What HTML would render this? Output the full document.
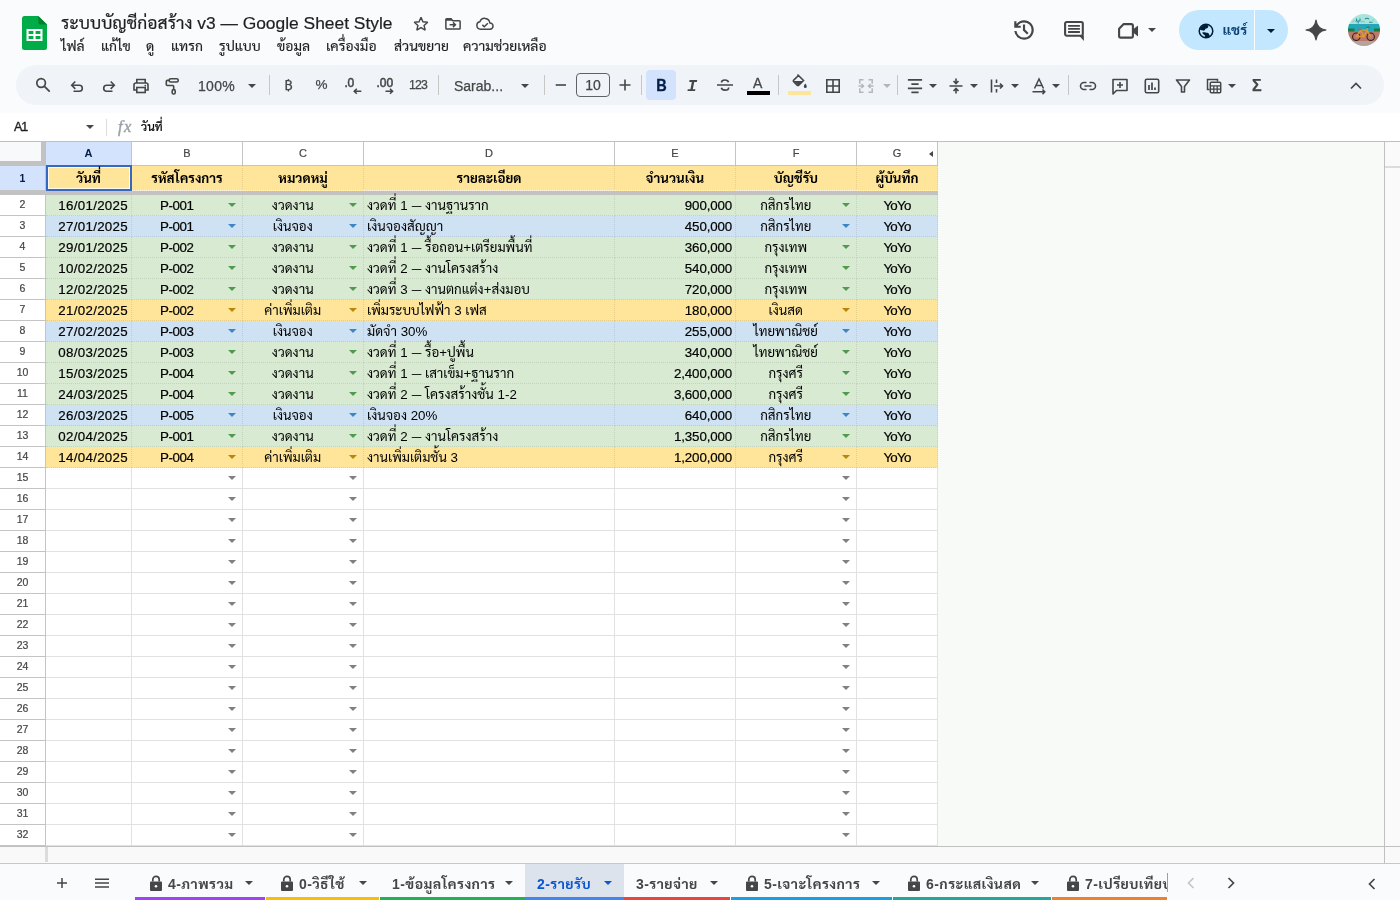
<!DOCTYPE html>
<html lang="th">
<head>
<meta charset="utf-8">
<title>ระบบบัญชีก่อสร้าง v3 — Google Sheet Style</title>
<style>
*{box-sizing:border-box;margin:0;padding:0}
html,body{width:1400px;height:900px;overflow:hidden;background:#f9fbfd}
body{position:relative;font-family:"Liberation Sans","Sarabun","Noto Sans Thai",sans-serif;color:#1f1f1f;-webkit-font-smoothing:antialiased}
.abs{position:absolute}
svg{display:block;overflow:visible}
/* ---------- title bar ---------- */
.logo{position:absolute;left:21.5px;top:16px}
.title{position:absolute;left:61px;top:10px;height:26px;line-height:26px;font-size:17.4px;color:#1f1f1f;white-space:nowrap;-webkit-text-stroke:.200px #1f1f1f}
.ticon{position:absolute;top:15px}
.menu{position:absolute;top:36px;left:61px;height:20px;line-height:20px;font-size:13.900px;color:#1f1f1f;white-space:nowrap;-webkit-text-stroke:.150px #1f1f1f}
.menu span{position:absolute;top:0}
.ric{position:absolute}
.share{position:absolute;left:1179px;top:10px;width:109px;height:40px;border-radius:20px;background:#c2e7ff;overflow:hidden}
.share .t{position:absolute;left:43.500px;top:9px;font-size:14px;font-weight:bold;color:#0a4278;line-height:22px}
.share .dv{position:absolute;left:75px;top:0;width:1px;height:40px;background:#f9fbfd}
.avatar{position:absolute;left:1348px;top:14px;width:32px;height:32px;border-radius:50%;overflow:hidden}
/* ---------- toolbar ---------- */
.tb{position:absolute;left:16px;top:65px;width:1368px;height:40px;border-radius:20px;background:#f0f4f9}
.tb .i{position:absolute;top:11px}
.tb .sep{position:absolute;top:10px;width:1px;height:20px;background:#c7c7c7}
.tb .tx{position:absolute;top:10px;height:20px;line-height:20px;font-size:14px;color:#444746;white-space:nowrap;-webkit-text-stroke:.250px #444746}
.tb .car{position:absolute;top:19px;width:0;height:0;border-left:4px solid transparent;border-right:4px solid transparent;border-top:4px solid #444746}
.tb .fs{position:absolute;left:560px;top:8px;width:34px;height:24px;border:1px solid #5f6368;border-radius:4px;font-size:14px;line-height:22px;text-align:center;color:#444746;-webkit-text-stroke:.250px #444746}
.tb .bold{position:absolute;left:630px;top:5px;width:30px;height:30px;border-radius:4px;background:#d3e3fd}
/* ---------- formula bar ---------- */
.fb{position:absolute;left:0;top:113px;width:1400px;height:28px;background:#fff}
.fb .nm{position:absolute;left:14px;top:4px;font-size:12.500px;line-height:20px;color:#1f1f1f;letter-spacing:-1.200px;-webkit-text-stroke:.350px #1f1f1f}
.fb .car{position:absolute;left:86px;top:12px;width:0;height:0;border-left:4px solid transparent;border-right:4px solid transparent;border-top:4px solid #444746}
.fb .sep{position:absolute;left:106px;top:6px;width:1px;height:17px;background:#dadce0}
.fb .fx{position:absolute;left:118px;top:4px;font:italic 16.500px "Liberation Serif",serif;color:#9aa0a6;line-height:20px;-webkit-text-stroke:.400px #9aa0a6;letter-spacing:1.300px}
.fb .val{position:absolute;left:141px;top:4px;font-size:12px;line-height:20px;color:#000;-webkit-text-stroke:.200px #000}
/* ---------- grid ---------- */
.grid{position:absolute;left:0;top:142px;width:1400px;height:721px;background:#f8faf8;overflow:hidden}
.gtop{position:absolute;left:0;top:141px;width:1400px;height:1px;background:#c0c0c0}
.grid>*{position:absolute}
.corner{left:0;top:0;width:46px;height:24px;background:#c2c2c2}
.corner:before{content:"";position:absolute;left:0;top:0;width:41px;height:19px;background:#f8f9fa}
.ch{top:0;height:23px;background:#fff;border-right:0;font-size:11px;line-height:23px;text-align:center;color:#444746;box-shadow:1px 0 0 #c4c4c4,0 1px 0 #c4c4c4,1px 1px 0 #c4c4c4;-webkit-text-stroke:.200px #444746}
.ch.sel{background:#d3e3fd;color:#041e49;font-weight:bold;-webkit-text-stroke:0}
.garr{position:absolute;right:4.500px;top:9px;width:0;height:0;border-top:3.500px solid transparent;border-bottom:3.500px solid transparent;border-right:4.500px solid #444746}
.rh{left:0;width:45px;height:20px;background:#fff;font-size:10.500px;line-height:19px;text-align:center;color:#444746;box-shadow:1px 0 0 #c4c4c4,0 1px 0 #c4c4c4,1px 1px 0 #c4c4c4;-webkit-text-stroke:.200px #444746}
.rh.sel{background:#d3e3fd;color:#041e49;font-weight:bold;-webkit-text-stroke:0}
.hc{top:24px;height:25px;background:#ffe599;font-size:13.33px;font-weight:bold;line-height:26px;text-align:center;color:#000;white-space:nowrap;border-right:1px dotted rgba(0,0,0,.095);border-bottom:1px dotted rgba(255,255,255,.7);box-sizing:border-box}
.hc span{position:relative;z-index:1}
.selbox{left:46px;top:23px;width:86px;height:26px;border:2px solid #3568c0;box-shadow:inset 0 0 0 1px rgba(255,255,255,.75)}
.frz{left:0;top:48.500px;width:938px;height:4.500px;background:#c2c2c2}
.row{left:46px;width:891px;height:21px;background:#fff}
.row .c{position:absolute;top:0;height:21px;border-right:1px solid #e1e1e1;border-bottom:1px solid #e1e1e1;box-sizing:border-box;font-size:13.33px;line-height:22px;color:#000;white-space:nowrap;padding:0 3px}
.row .c span{position:relative;z-index:1}
.row .c .em{display:inline-block;transform:scaleX(.720);margin:0 -1.700px}
.row .kA{letter-spacing:.300px;-webkit-text-stroke:.200px #000}
.row .kB{letter-spacing:-.400px;-webkit-text-stroke:.200px #000}
.row .kE{letter-spacing:-.150px;-webkit-text-stroke:.200px #000}
.row .kG{letter-spacing:-.750px;-webkit-text-stroke:.200px #000}
.row .c.al{text-align:left}
.row .c.ar{text-align:right}
.row .c.ac{text-align:center}
.row .c.hasdd{padding-right:23.500px;padding-left:3px}
.dd{position:absolute;right:6px;top:8px;width:0;height:0;border-left:4px solid transparent;border-right:4px solid transparent;border-top:4px solid #808080}
.cg .c{background:#d9ead3;border-right:1px dotted rgba(0,0,0,.095);border-bottom:1px dotted rgba(0,0,0,.095)}
.cb .c{background:#cfe2f3;border-right:1px dotted rgba(0,0,0,.095);border-bottom:1px dotted rgba(0,0,0,.095)}
.cy .c{background:#ffe599;border-right:1px dotted rgba(0,0,0,.095);border-bottom:1px dotted rgba(0,0,0,.095)}
.cg .dd{border-top-color:#4e9a4e}
.cb .dd{border-top-color:#3d85c6}
.cy .dd{border-top-color:#b8860b}
/* scrollbars */
.vsb{left:1384px;top:0;width:16px;height:704px;background:#fafafa;border-left:1px solid #c0c0c0}
.vsb:before{content:"";position:absolute;left:0;top:24px;width:16px;height:2px;background:#dadce0}
.hsb{left:0;top:704px;width:1400px;height:17px;background:#f9f9f9;border-top:1px solid #c0c0c0}
.hsb:before{content:"";position:absolute;left:45px;top:0;width:2.500px;height:14.500px;background:#dadce0}
.hsb:after{content:"";position:absolute;left:1384px;top:0;width:1px;height:16px;background:#c0c0c0}
/* ---------- tabs ---------- */
.tabs{position:absolute;left:0;top:863px;width:1400px;height:37px;background:#f9fbfd;border-top:1px solid #c7c7c7}
.tabs>*{position:absolute}
.tab{top:0;height:36px;font-size:14px;line-height:36px;color:#444746;white-space:nowrap;overflow:hidden}
.tab .ul{position:absolute;left:0;right:0;bottom:0;height:3px}
.tab .lk{position:absolute;top:11px}
.tab .nm{position:absolute;top:2px;font-weight:bold;letter-spacing:.450px}
.tab .car{position:absolute;top:17px;width:0;height:0;border-left:4px solid transparent;border-right:4px solid transparent;border-top:4px solid #444746;margin-left:1px}
.tab.act{background:#dde3ec;color:#0b57d0}
.tab.act .car{border-top-color:#0b57d0}
#app{position:absolute;left:0;top:0;width:1400px;height:900px;overflow:hidden;background:#f9fbfd;will-change:transform}
</style>
</head>
<body>
<div id="app">

<!-- ===== title bar ===== -->
<svg class="logo" width="25" height="34" viewBox="0 0 25 34">
  <path d="M2.500 0H16.300L25 8.600V31.500a2.500 2.500 0 0 1-2.500 2.500h-20A2.500 2.500 0 0 1 0 31.500V2.500A2.500 2.500 0 0 1 2.500 0z" fill="#00ac47"/>
  <path d="M16.300 0L25 8.600H18.300a2 2 0 0 1-2-2z" fill="#00832d"/>
  <path d="M4.500 13h16v12h-16zM6.600 15.100v2.800h4.800v-2.800zM13.600 15.100v2.800h4.800v-2.800zM6.600 20.100v2.800h4.800v-2.800zM13.600 20.100v2.800h4.800v-2.800z" fill="#fff" fill-rule="evenodd"/>
</svg>
<div class="title">ระบบบัญชีก่อสร้าง v3 — Google Sheet Style</div>
<svg class="ticon" style="left:412px" width="18" height="18" viewBox="0 0 24 24"><path d="M12 3l2.600 6.100 6.400.600-4.900 4.200 1.500 6.300L12 16.900 6.400 20.200l1.500-6.300L3 9.700l6.400-.600z" fill="none" stroke="#444746" stroke-width="1.900" stroke-linejoin="miter" stroke-miterlimit="2.500"/></svg>
<svg class="ticon" style="left:444px" width="18" height="18" viewBox="0 0 24 24"><path d="M3.500 5h6l2 2.500h9a1 1 0 0 1 1 1V17.700a1 1 0 0 1-1 1h-17a1 1 0 0 1-1-1V6a1 1 0 0 1 1-1z" fill="none" stroke="#444746" stroke-width="2" stroke-linejoin="round"/><path d="M2.500 5h7.500l1.500 2.500h-9z" fill="#444746"/><path d="M7.500 13h7M12 9.800l3.200 3.200-3.200 3.200" fill="none" stroke="#444746" stroke-width="2"/></svg>
<svg class="ticon" style="left:475px" width="20" height="18" viewBox="0 0 26 24"><path d="M7 19a5 5 0 0 1-.800-9.900 6.800 6.800 0 0 1 13.200 1.500 4.200 4.200 0 0 1 .200 8.400z" fill="none" stroke="#444746" stroke-width="2" stroke-linejoin="round"/><path d="M9.500 13.200l2.500 2.500 4.800-4.800" fill="none" stroke="#444746" stroke-width="2"/></svg>
<div class="menu">
  <span style="left:0">ไฟล์</span>
  <span style="left:40px">แก้ไข</span>
  <span style="left:85px">ดู</span>
  <span style="left:110px">แทรก</span>
  <span style="left:158px">รูปแบบ</span>
  <span style="left:216px">ข้อมูล</span>
  <span style="left:265px">เครื่องมือ</span>
  <span style="left:333px">ส่วนขยาย</span>
  <span style="left:402px">ความช่วยเหลือ</span>
</div>
<!-- right side -->
<svg class="ric" style="left:1011px;top:16.800px" width="26" height="26" viewBox="0 0 24 24"><path d="M12 21q-3.450 0-6.013-2.288T3.050 13H5.100q.350 2.600 2.313 4.300T12 19q2.925 0 4.963-2.038T19 12t-2.037-4.962T12 5q-1.725 0-3.225.800T6.250 8H9v2H3V4h2v2.350q1.275-1.600 3.113-2.475T12 3q1.875 0 3.513.713t2.850 1.924 1.925 2.850T21 12t-.712 3.513-1.925 2.850-2.850 1.925T12 21m2.800-4.800L11 12.400V7h2v4.600l3.200 3.200z" fill="#444746"/></svg>
<svg class="ric" style="left:1062px;top:18px" width="24" height="24" viewBox="0 0 24 24"><rect x="3.100" y="4" width="17.700" height="13.700" rx="1.600" fill="none" stroke="#444746" stroke-width="2.100"/><path d="M17 17.500h4.900v5.400z" fill="#444746"/><path d="M6.100 7.900h11.800M6.100 10.900h11.800M6.100 14h11.800" stroke="#444746" stroke-width="1.900"/></svg>
<svg class="ric" style="left:1116px;top:18px" width="24" height="24" viewBox="0 0 24 24"><path d="M7.700 6.100h7.600a1.600 1.600 0 0 1 1.600 1.600v10.300a1.600 1.600 0 0 1-1.600 1.600H4.700a1.600 1.600 0 0 1-1.600-1.600v-7.200z" fill="none" stroke="#444746" stroke-width="2.100" stroke-linejoin="round"/><path d="M16.500 11.800L22 7.400v11l-5.500-4.400z" fill="#444746"/></svg>
<svg class="ric" style="left:1148px;top:28px" width="8" height="4" viewBox="0 0 8 4"><path d="M0 0h8L4 4z" fill="#444746"/></svg>
<div class="share">
  <svg class="abs" style="left:18.500px;top:12.500px" width="16" height="16" viewBox="0 0 16 16"><circle cx="8" cy="8" r="6.800" fill="#c2e7ff" stroke="#001d35" stroke-width="1.500"/><path d="M1.800 6.200C3 3.400 5.300 1.700 8.200 1.500 9.900 2 10.600 3 10.200 4.200 9.800 5.200 8.400 5 7.600 5.800 6.800 6.600 7.200 7.300 6.200 7.600 5.200 7.900 4.800 7 3.800 7.200 3 7.300 2.300 6.900 1.800 6.200zM4.300 9.600C5.400 9 6.600 9.200 7.600 9.600 8.700 10 9.900 9.600 10.700 10.400 11.400 11.200 11.200 12.300 12 13.200 10.800 14.200 9.500 14.600 8 14.600 7.200 14.600 6.900 14.200 7 13.200 7.100 12.200 6.200 11.900 5.400 11.300 4.800 10.800 4.300 10.300 4.300 9.600z" fill="#001d35"/></svg>
  <span class="t">แชร์</span>
  <span class="dv"></span>
  <svg class="abs" style="left:88px;top:18.700px" width="8" height="4" viewBox="0 0 8 4"><path d="M0 0h8L4 4z" fill="#001d35"/></svg>
</div>
<svg class="ric" style="left:1306px;top:20px" width="20" height="20" viewBox="0 0 20 20"><path d="M10 0C10.700 5.600 14.400 9.300 20 10 14.400 10.700 10.700 14.400 10 20 9.300 14.400 5.600 10.700 0 10 5.600 9.300 9.300 5.600 10 0z" fill="#444746" stroke="#444746" stroke-width="1.200" stroke-linejoin="round"/></svg>
<div class="avatar">
  <svg width="32" height="32" viewBox="0 0 32 32"><rect width="32" height="32" fill="#a9e4dc"/><rect y="10" width="32" height="8" fill="#23a6ba"/><rect y="17.500" width="32" height="10" fill="#b97a6e"/><rect y="27" width="32" height="5" fill="#b7a39e"/><path d="M0 14.500h6.500v3H0zM26 14.500h6v3h-6z" fill="#1e7a3a"/><path d="M8.500 4.500v2.500h3.500v-2.500M10.200 7v2.500M17 5.200c1-1.200 3-1.200 4 0M21 8.200h3.500" fill="none" stroke="#2b8a96" stroke-width="1.100"/><path d="M4.500 8l2-1.500 2 2 2-1.500M13 8.500l2-1.500 2 1.500M24.500 7l1.500-1.500" fill="none" stroke="#6fb9b6" stroke-width=".8"/><circle cx="8.300" cy="22.700" r="3.700" fill="none" stroke="#3b1d18" stroke-width="1.100"/><circle cx="22.700" cy="22.700" r="3.700" fill="none" stroke="#3b1d18" stroke-width="1.100"/><path d="M8.300 22.700l4.200-6.500h6.500l3.700 6.500M12.500 16.200l3.500 6.300 3-6.300M16 22.500H8.500M19 16.200l.800-2.700" fill="none" stroke="#e39a2d" stroke-width="1.300"/><path d="M10 15.500h3.500" stroke="#d8562a" stroke-width="1.600"/><path d="M18.500 13.300h3" stroke="#7a5a3a" stroke-width="1.200"/></svg>
</div>
<!-- ===== toolbar ===== -->
<div class="tb">
  <svg class="i" style="left:17px;top:10px" width="20" height="20" viewBox="0 0 20 20"><circle cx="8.100" cy="8" r="4.300" fill="none" stroke="#444746" stroke-width="1.700"/><path d="M11.200 11.100l5.500 5.500" stroke="#444746" stroke-width="1.800"/></svg>
  <svg class="i" style="left:51px;top:10px" width="20" height="20" viewBox="0 0 20 20"><path d="M5.200 10.200h7.100a3 3 0 0 1 0 6H6.500" fill="none" stroke="#444746" stroke-width="1.600"/><path d="M8.300 6.500L4.700 10.200l3.600 3.700" fill="none" stroke="#444746" stroke-width="1.600"/></svg>
  <svg class="i" style="left:83px;top:10px" width="20" height="20" viewBox="0 0 20 20"><path d="M14.800 10.200H7.700a3 3 0 0 0 0 6h5.800" fill="none" stroke="#444746" stroke-width="1.600"/><path d="M11.700 6.500l3.600 3.700-3.600 3.700" fill="none" stroke="#444746" stroke-width="1.600"/></svg>
  <svg class="i" style="left:115px;top:11px" width="20" height="20" viewBox="0 0 20 20"><path d="M5.800 7V3.500h8.400V7" fill="none" stroke="#444746" stroke-width="1.600"/><path d="M5.500 14H3V9a2 2 0 0 1 2-2h10a2 2 0 0 1 2 2v5h-2.500" fill="none" stroke="#444746" stroke-width="1.600"/><rect x="5.800" y="11.500" width="8.400" height="5" fill="none" stroke="#444746" stroke-width="1.600"/><circle cx="14.300" cy="9.600" r=".9" fill="#444746"/></svg>
  <svg class="i" style="left:146px;top:10px" width="20" height="20" viewBox="0 0 20 20"><rect x="7.200" y="3.800" width="9" height="3.200" rx="1.500" fill="none" stroke="#444746" stroke-width="1.600"/><path d="M7.200 5.400H5.300a1 1 0 0 0-1 1v3.100a1 1 0 0 0 1 1h5.400a1 1 0 0 1 1 1V14" fill="none" stroke="#444746" stroke-width="1.600"/><rect x="10.200" y="14.600" width="3" height="4.400" rx="1.300" fill="none" stroke="#444746" stroke-width="1.600"/></svg>
  <span class="tx" style="left:182px;top:11px;letter-spacing:.300px">100%</span>
  <i class="car" style="left:232px"></i>
  <i class="sep" style="left:253px"></i>
  <span class="tx" style="left:268.500px;font-size:14px;top:9.500px">฿</span>
  <span class="tx" style="left:299.500px;font-size:13.500px;top:10px">%</span>
  <span class="tx" style="left:328.400px;top:7.700px;font-size:12px;-webkit-text-stroke:.500px #444746;letter-spacing:-.100px">.0</span>
  <svg class="i" style="left:337px;top:22.500px" width="9" height="7" viewBox="0 0 9 7"><path d="M8.300 3.300H1.400M3.800.800L1.200 3.300l2.600 2.500" fill="none" stroke="#444746" stroke-width="1.500"/></svg>
  <span class="tx" style="left:360.600px;top:7.700px;font-size:12px;-webkit-text-stroke:.500px #444746;letter-spacing:-.100px">.00</span>
  <svg class="i" style="left:368.500px;top:22.500px" width="9" height="7" viewBox="0 0 9 7"><path d="M.500 3.300h6.900M5 .800l2.600 2.500L5 5.800" fill="none" stroke="#444746" stroke-width="1.500"/></svg>
  <span class="tx" style="left:393px;top:9.800px;font-size:12.300px;letter-spacing:-.900px">123</span>
  <i class="sep" style="left:422px"></i>
  <span class="tx" style="left:438px;top:11px">Sarab...</span>
  <i class="car" style="left:505px"></i>
  <i class="sep" style="left:528px"></i>
  <svg class="i" style="left:535px;top:10px" width="20" height="20" viewBox="0 0 20 20"><path d="M4.700 10h10.300" stroke="#444746" stroke-width="1.600"/></svg>
  <div class="fs">10</div>
  <svg class="i" style="left:599px;top:10px" width="20" height="20" viewBox="0 0 20 20"><path d="M4.500 10h11M10 4.500v11" stroke="#444746" stroke-width="1.600"/></svg>
  <i class="sep" style="left:625px"></i>
  <div class="bold"></div>
  <span class="tx" style="left:640.300px;top:10.500px;font-weight:bold;font-size:14.500px;color:#041e49;-webkit-text-stroke:.300px #041e49;transform:scaleY(1.080);transform-origin:50% 70%">B</span>
  <span class="tx" style="left:671px;top:12px;font:italic bold 17px 'Liberation Mono',monospace;line-height:20px;-webkit-text-stroke:0">I</span>
  <svg class="i" style="left:699px;top:10px" width="20" height="20" viewBox="0 0 20 20"><path d="M2 10h16" stroke="#444746" stroke-width="1.500"/><path d="M13.500 7.200c-.300-1.200-1.500-2.200-3.500-2.200-2.200 0-3.500 1.100-3.500 2.500M6.300 12.800c.300 1.300 1.600 2.300 3.700 2.300 2.300 0 3.700-1.100 3.700-2.700" fill="none" stroke="#444746" stroke-width="1.600"/></svg>
  <span class="tx" style="left:737px;font-size:14px;top:7.500px;-webkit-text-stroke:.300px #444746">A</span>
  <i class="abs" style="left:731px;top:26px;width:23px;height:4px;background:#000"></i>
  <i class="sep" style="left:762px"></i>
  <svg class="i" style="left:773px;top:6px" width="20" height="20" viewBox="0 0 20 20"><path d="M8.500 3.500l6 6-4.700 4.700a1.200 1.200 0 0 1-1.700 0L4.700 10.800a1.200 1.200 0 0 1 0-1.700L9.500 4.500" fill="none" stroke="#444746" stroke-width="1.600"/><path d="M4.500 10h9.800l-5 4.800z" fill="#444746"/><path d="M16.300 12.500c.800 1.200 1.500 2.100 1.500 2.900a1.500 1.500 0 0 1-3 0c0-.800.700-1.700 1.500-2.900z" fill="#444746"/></svg>
  <i class="abs" style="left:772px;top:26px;width:23px;height:4px;background:#ffe599"></i>
  <svg class="i" style="left:807px" width="20" height="20" viewBox="0 0 20 20"><path d="M3.800 3.800h12.400v12.400H3.800zM10 3.800v12.400M3.800 10h12.400" fill="none" stroke="#444746" stroke-width="1.600"/></svg>
  <svg class="i" style="left:840px" width="20" height="20" viewBox="0 0 20 20"><path d="M7.500 3.800H3.800v4M12.500 3.800h3.700v4M7.500 16.200H3.800v-4M12.500 16.200h3.700v-4M2.500 10h5M5.500 8l2 2-2 2M17.500 10h-5M14.500 8l-2 2 2 2" fill="none" stroke="#b4b7ba" stroke-width="1.500"/></svg>
  <i class="car" style="left:867px;border-top-color:#b4b7ba"></i>
  <i class="sep" style="left:881px"></i>
  <svg class="i" style="left:888px" width="20" height="20" viewBox="0 0 20 20"><path d="M3.900 3.900h14.200M7.400 8.100h7.200M3.900 12.400h14.200M7.400 16.300h7.200" stroke="#444746" stroke-width="1.700"/></svg>
  <i class="car" style="left:913px"></i>
  <svg class="i" style="left:930px" width="20" height="20" viewBox="0 0 20 20"><path d="M3.500 10h13M10 2.500v5M7.500 5l2.500 2.500L12.500 5M10 17.500v-5M7.500 15l2.500-2.500 2.500 2.500" fill="none" stroke="#444746" stroke-width="1.600"/></svg>
  <i class="car" style="left:954px"></i>
  <svg class="i" style="left:971px" width="20" height="20" viewBox="0 0 20 20"><path d="M4.500 3.500v13M9.500 3.500v3.500M9.500 13v3.500M7 10h8.500M13 7.500l2.500 2.500-2.500 2.500" fill="none" stroke="#444746" stroke-width="1.600"/></svg>
  <i class="car" style="left:995px"></i>
  <svg class="i" style="left:1012.500px" width="20" height="20" viewBox="0 0 20 20"><path d="M5.500 12.500L10 3l4.500 9.500M7 9.500h6" fill="none" stroke="#444746" stroke-width="1.500"/><path d="M3.500 15.800h12M13.500 13.500l2.300 2.300-2.300 2.300" fill="none" stroke="#444746" stroke-width="1.500"/></svg>
  <i class="car" style="left:1036px"></i>
  <i class="sep" style="left:1052px"></i>
  <svg class="i" style="left:1062px" width="20" height="20" viewBox="0 0 20 20"><path d="M8.500 6.500H6a3.500 3.500 0 0 0 0 7h2.500M11.500 6.500H14a3.500 3.500 0 0 1 0 7h-2.500M6.500 10h7" fill="none" stroke="#444746" stroke-width="1.600"/></svg>
  <svg class="i" style="left:1094px" width="20" height="20" viewBox="0 0 20 20"><path d="M3 3.500h14v11H6.500L3 18z" fill="none" stroke="#444746" stroke-width="1.600" stroke-linejoin="round"/><path d="M10 6v6M7 9h6" stroke="#444746" stroke-width="1.600"/></svg>
  <svg class="i" style="left:1126px" width="20" height="20" viewBox="0 0 20 20"><rect x="3.300" y="3.300" width="13.400" height="13.400" rx="1.500" fill="none" stroke="#444746" stroke-width="1.600"/><path d="M7 9v5M10 6.500v7.500M13 11.500v2.500" stroke="#444746" stroke-width="1.700"/></svg>
  <svg class="i" style="left:1157px" width="20" height="20" viewBox="0 0 20 20"><path d="M3.500 4h13l-5 6.500v5.500h-3v-5.500z" fill="none" stroke="#444746" stroke-width="1.600" stroke-linejoin="round"/></svg>
  <svg class="i" style="left:1188px" width="20" height="20" viewBox="0 0 20 20"><path d="M5.500 13.500H3.500V3.500h10v2" fill="none" stroke="#444746" stroke-width="1.500"/><rect x="6.300" y="6.300" width="10.400" height="10.400" rx="1" fill="none" stroke="#444746" stroke-width="1.500"/><path d="M6.300 9.800h10.400M9.800 9.800v6.900M13.200 9.800v6.900M6.300 13.200h10.400" stroke="#444746" stroke-width="1.300"/></svg>
  <i class="car" style="left:1212px"></i>
  <span class="tx" style="left:1236px;top:11px;font-size:16px;font-weight:bold">Σ</span>
  <svg class="i" style="left:1330px" width="20" height="20" viewBox="0 0 20 20"><path d="M5 12.500l5-5 5 5" fill="none" stroke="#444746" stroke-width="1.700"/></svg>
</div>
<!-- ===== formula bar ===== -->
<div class="fb">
  <span class="nm">A1</span>
  <i class="car"></i>
  <i class="sep"></i>
  <span class="fx">fx</span>
  <span class="val">วันที่</span>
</div>

<div class="gtop"></div>
<div class="grid">
<div class="corner"></div>
<div class="ch sel" style="left:46px;width:85px"><span>A</span></div>
<div class="ch" style="left:132px;width:110px"><span>B</span></div>
<div class="ch" style="left:243px;width:120px"><span>C</span></div>
<div class="ch" style="left:364px;width:250px"><span>D</span></div>
<div class="ch" style="left:615px;width:120px"><span>E</span></div>
<div class="ch" style="left:736px;width:120px"><span>F</span></div>
<div class="ch" style="left:857px;width:80px"><span>G</span><i class="garr"></i></div>
<div class="rh sel" style="top:24px;height:24px;line-height:24px">1</div>
<div class="hc" style="left:46px;width:86px"><span>วันที่</span></div>
<div class="hc" style="left:132px;width:111px"><span>รหัสโครงการ</span></div>
<div class="hc" style="left:243px;width:121px"><span>หมวดหมู่</span></div>
<div class="hc" style="left:364px;width:251px"><span>รายละเอียด</span></div>
<div class="hc" style="left:615px;width:121px"><span>จำนวนเงิน</span></div>
<div class="hc" style="left:736px;width:121px"><span>บัญชีรับ</span></div>
<div class="hc" style="left:857px;width:81px"><span>ผู้บันทึก</span></div>
<div class="selbox"></div>
<div class="frz"></div>
<div class="rh" style="top:53px">2</div>
<div class="row cg" style="top:53px">
<div class="c ar kA" style="left:0px;width:86px"><span>16/01/2025</span></div>
<div class="c ac kB hasdd" style="left:86px;width:111px"><span>P-001</span><i class="dd"></i></div>
<div class="c ac kC hasdd" style="left:197px;width:121px"><span>งวดงาน</span><i class="dd"></i></div>
<div class="c al kD" style="left:318px;width:251px"><span>งวดที่ 1 <span class="em">—</span> งานฐานราก</span></div>
<div class="c ar kE" style="left:569px;width:121px"><span>900,000</span></div>
<div class="c ac kF hasdd" style="left:690px;width:121px"><span>กสิกรไทย</span><i class="dd"></i></div>
<div class="c ac kG" style="left:811px;width:81px"><span>YoYo</span></div>
</div>
<div class="rh" style="top:74px">3</div>
<div class="row cb" style="top:74px">
<div class="c ar kA" style="left:0px;width:86px"><span>27/01/2025</span></div>
<div class="c ac kB hasdd" style="left:86px;width:111px"><span>P-001</span><i class="dd"></i></div>
<div class="c ac kC hasdd" style="left:197px;width:121px"><span>เงินจอง</span><i class="dd"></i></div>
<div class="c al kD" style="left:318px;width:251px"><span>เงินจองสัญญา</span></div>
<div class="c ar kE" style="left:569px;width:121px"><span>450,000</span></div>
<div class="c ac kF hasdd" style="left:690px;width:121px"><span>กสิกรไทย</span><i class="dd"></i></div>
<div class="c ac kG" style="left:811px;width:81px"><span>YoYo</span></div>
</div>
<div class="rh" style="top:95px">4</div>
<div class="row cg" style="top:95px">
<div class="c ar kA" style="left:0px;width:86px"><span>29/01/2025</span></div>
<div class="c ac kB hasdd" style="left:86px;width:111px"><span>P-002</span><i class="dd"></i></div>
<div class="c ac kC hasdd" style="left:197px;width:121px"><span>งวดงาน</span><i class="dd"></i></div>
<div class="c al kD" style="left:318px;width:251px"><span>งวดที่ 1 <span class="em">—</span> รื้อถอน+เตรียมพื้นที่</span></div>
<div class="c ar kE" style="left:569px;width:121px"><span>360,000</span></div>
<div class="c ac kF hasdd" style="left:690px;width:121px"><span>กรุงเทพ</span><i class="dd"></i></div>
<div class="c ac kG" style="left:811px;width:81px"><span>YoYo</span></div>
</div>
<div class="rh" style="top:116px">5</div>
<div class="row cg" style="top:116px">
<div class="c ar kA" style="left:0px;width:86px"><span>10/02/2025</span></div>
<div class="c ac kB hasdd" style="left:86px;width:111px"><span>P-002</span><i class="dd"></i></div>
<div class="c ac kC hasdd" style="left:197px;width:121px"><span>งวดงาน</span><i class="dd"></i></div>
<div class="c al kD" style="left:318px;width:251px"><span>งวดที่ 2 <span class="em">—</span> งานโครงสร้าง</span></div>
<div class="c ar kE" style="left:569px;width:121px"><span>540,000</span></div>
<div class="c ac kF hasdd" style="left:690px;width:121px"><span>กรุงเทพ</span><i class="dd"></i></div>
<div class="c ac kG" style="left:811px;width:81px"><span>YoYo</span></div>
</div>
<div class="rh" style="top:137px">6</div>
<div class="row cg" style="top:137px">
<div class="c ar kA" style="left:0px;width:86px"><span>12/02/2025</span></div>
<div class="c ac kB hasdd" style="left:86px;width:111px"><span>P-002</span><i class="dd"></i></div>
<div class="c ac kC hasdd" style="left:197px;width:121px"><span>งวดงาน</span><i class="dd"></i></div>
<div class="c al kD" style="left:318px;width:251px"><span>งวดที่ 3 <span class="em">—</span> งานตกแต่ง+ส่งมอบ</span></div>
<div class="c ar kE" style="left:569px;width:121px"><span>720,000</span></div>
<div class="c ac kF hasdd" style="left:690px;width:121px"><span>กรุงเทพ</span><i class="dd"></i></div>
<div class="c ac kG" style="left:811px;width:81px"><span>YoYo</span></div>
</div>
<div class="rh" style="top:158px">7</div>
<div class="row cy" style="top:158px">
<div class="c ar kA" style="left:0px;width:86px"><span>21/02/2025</span></div>
<div class="c ac kB hasdd" style="left:86px;width:111px"><span>P-002</span><i class="dd"></i></div>
<div class="c ac kC hasdd" style="left:197px;width:121px"><span>ค่าเพิ่มเติม</span><i class="dd"></i></div>
<div class="c al kD" style="left:318px;width:251px"><span>เพิ่มระบบไฟฟ้า 3 เฟส</span></div>
<div class="c ar kE" style="left:569px;width:121px"><span>180,000</span></div>
<div class="c ac kF hasdd" style="left:690px;width:121px"><span>เงินสด</span><i class="dd"></i></div>
<div class="c ac kG" style="left:811px;width:81px"><span>YoYo</span></div>
</div>
<div class="rh" style="top:179px">8</div>
<div class="row cb" style="top:179px">
<div class="c ar kA" style="left:0px;width:86px"><span>27/02/2025</span></div>
<div class="c ac kB hasdd" style="left:86px;width:111px"><span>P-003</span><i class="dd"></i></div>
<div class="c ac kC hasdd" style="left:197px;width:121px"><span>เงินจอง</span><i class="dd"></i></div>
<div class="c al kD" style="left:318px;width:251px"><span>มัดจำ 30%</span></div>
<div class="c ar kE" style="left:569px;width:121px"><span>255,000</span></div>
<div class="c ac kF hasdd" style="left:690px;width:121px"><span>ไทยพาณิชย์</span><i class="dd"></i></div>
<div class="c ac kG" style="left:811px;width:81px"><span>YoYo</span></div>
</div>
<div class="rh" style="top:200px">9</div>
<div class="row cg" style="top:200px">
<div class="c ar kA" style="left:0px;width:86px"><span>08/03/2025</span></div>
<div class="c ac kB hasdd" style="left:86px;width:111px"><span>P-003</span><i class="dd"></i></div>
<div class="c ac kC hasdd" style="left:197px;width:121px"><span>งวดงาน</span><i class="dd"></i></div>
<div class="c al kD" style="left:318px;width:251px"><span>งวดที่ 1 <span class="em">—</span> รื้อ+ปูพื้น</span></div>
<div class="c ar kE" style="left:569px;width:121px"><span>340,000</span></div>
<div class="c ac kF hasdd" style="left:690px;width:121px"><span>ไทยพาณิชย์</span><i class="dd"></i></div>
<div class="c ac kG" style="left:811px;width:81px"><span>YoYo</span></div>
</div>
<div class="rh" style="top:221px">10</div>
<div class="row cg" style="top:221px">
<div class="c ar kA" style="left:0px;width:86px"><span>15/03/2025</span></div>
<div class="c ac kB hasdd" style="left:86px;width:111px"><span>P-004</span><i class="dd"></i></div>
<div class="c ac kC hasdd" style="left:197px;width:121px"><span>งวดงาน</span><i class="dd"></i></div>
<div class="c al kD" style="left:318px;width:251px"><span>งวดที่ 1 <span class="em">—</span> เสาเข็ม+ฐานราก</span></div>
<div class="c ar kE" style="left:569px;width:121px"><span>2,400,000</span></div>
<div class="c ac kF hasdd" style="left:690px;width:121px"><span>กรุงศรี</span><i class="dd"></i></div>
<div class="c ac kG" style="left:811px;width:81px"><span>YoYo</span></div>
</div>
<div class="rh" style="top:242px">11</div>
<div class="row cg" style="top:242px">
<div class="c ar kA" style="left:0px;width:86px"><span>24/03/2025</span></div>
<div class="c ac kB hasdd" style="left:86px;width:111px"><span>P-004</span><i class="dd"></i></div>
<div class="c ac kC hasdd" style="left:197px;width:121px"><span>งวดงาน</span><i class="dd"></i></div>
<div class="c al kD" style="left:318px;width:251px"><span>งวดที่ 2 <span class="em">—</span> โครงสร้างชั้น 1-2</span></div>
<div class="c ar kE" style="left:569px;width:121px"><span>3,600,000</span></div>
<div class="c ac kF hasdd" style="left:690px;width:121px"><span>กรุงศรี</span><i class="dd"></i></div>
<div class="c ac kG" style="left:811px;width:81px"><span>YoYo</span></div>
</div>
<div class="rh" style="top:263px">12</div>
<div class="row cb" style="top:263px">
<div class="c ar kA" style="left:0px;width:86px"><span>26/03/2025</span></div>
<div class="c ac kB hasdd" style="left:86px;width:111px"><span>P-005</span><i class="dd"></i></div>
<div class="c ac kC hasdd" style="left:197px;width:121px"><span>เงินจอง</span><i class="dd"></i></div>
<div class="c al kD" style="left:318px;width:251px"><span>เงินจอง 20%</span></div>
<div class="c ar kE" style="left:569px;width:121px"><span>640,000</span></div>
<div class="c ac kF hasdd" style="left:690px;width:121px"><span>กสิกรไทย</span><i class="dd"></i></div>
<div class="c ac kG" style="left:811px;width:81px"><span>YoYo</span></div>
</div>
<div class="rh" style="top:284px">13</div>
<div class="row cg" style="top:284px">
<div class="c ar kA" style="left:0px;width:86px"><span>02/04/2025</span></div>
<div class="c ac kB hasdd" style="left:86px;width:111px"><span>P-001</span><i class="dd"></i></div>
<div class="c ac kC hasdd" style="left:197px;width:121px"><span>งวดงาน</span><i class="dd"></i></div>
<div class="c al kD" style="left:318px;width:251px"><span>งวดที่ 2 <span class="em">—</span> งานโครงสร้าง</span></div>
<div class="c ar kE" style="left:569px;width:121px"><span>1,350,000</span></div>
<div class="c ac kF hasdd" style="left:690px;width:121px"><span>กสิกรไทย</span><i class="dd"></i></div>
<div class="c ac kG" style="left:811px;width:81px"><span>YoYo</span></div>
</div>
<div class="rh" style="top:305px">14</div>
<div class="row cy" style="top:305px">
<div class="c ar kA" style="left:0px;width:86px"><span>14/04/2025</span></div>
<div class="c ac kB hasdd" style="left:86px;width:111px"><span>P-004</span><i class="dd"></i></div>
<div class="c ac kC hasdd" style="left:197px;width:121px"><span>ค่าเพิ่มเติม</span><i class="dd"></i></div>
<div class="c al kD" style="left:318px;width:251px"><span>งานเพิ่มเติมชั้น 3</span></div>
<div class="c ar kE" style="left:569px;width:121px"><span>1,200,000</span></div>
<div class="c ac kF hasdd" style="left:690px;width:121px"><span>กรุงศรี</span><i class="dd"></i></div>
<div class="c ac kG" style="left:811px;width:81px"><span>YoYo</span></div>
</div>
<div class="rh" style="top:326px">15</div>
<div class="row" style="top:326px">
<div class="c ar kA" style="left:0px;width:86px"></div>
<div class="c ac kB hasdd" style="left:86px;width:111px"><i class="dd"></i></div>
<div class="c ac kC hasdd" style="left:197px;width:121px"><i class="dd"></i></div>
<div class="c al kD" style="left:318px;width:251px"></div>
<div class="c ar kE" style="left:569px;width:121px"></div>
<div class="c ac kF hasdd" style="left:690px;width:121px"><i class="dd"></i></div>
<div class="c ac kG" style="left:811px;width:81px"></div>
</div>
<div class="rh" style="top:347px">16</div>
<div class="row" style="top:347px">
<div class="c ar kA" style="left:0px;width:86px"></div>
<div class="c ac kB hasdd" style="left:86px;width:111px"><i class="dd"></i></div>
<div class="c ac kC hasdd" style="left:197px;width:121px"><i class="dd"></i></div>
<div class="c al kD" style="left:318px;width:251px"></div>
<div class="c ar kE" style="left:569px;width:121px"></div>
<div class="c ac kF hasdd" style="left:690px;width:121px"><i class="dd"></i></div>
<div class="c ac kG" style="left:811px;width:81px"></div>
</div>
<div class="rh" style="top:368px">17</div>
<div class="row" style="top:368px">
<div class="c ar kA" style="left:0px;width:86px"></div>
<div class="c ac kB hasdd" style="left:86px;width:111px"><i class="dd"></i></div>
<div class="c ac kC hasdd" style="left:197px;width:121px"><i class="dd"></i></div>
<div class="c al kD" style="left:318px;width:251px"></div>
<div class="c ar kE" style="left:569px;width:121px"></div>
<div class="c ac kF hasdd" style="left:690px;width:121px"><i class="dd"></i></div>
<div class="c ac kG" style="left:811px;width:81px"></div>
</div>
<div class="rh" style="top:389px">18</div>
<div class="row" style="top:389px">
<div class="c ar kA" style="left:0px;width:86px"></div>
<div class="c ac kB hasdd" style="left:86px;width:111px"><i class="dd"></i></div>
<div class="c ac kC hasdd" style="left:197px;width:121px"><i class="dd"></i></div>
<div class="c al kD" style="left:318px;width:251px"></div>
<div class="c ar kE" style="left:569px;width:121px"></div>
<div class="c ac kF hasdd" style="left:690px;width:121px"><i class="dd"></i></div>
<div class="c ac kG" style="left:811px;width:81px"></div>
</div>
<div class="rh" style="top:410px">19</div>
<div class="row" style="top:410px">
<div class="c ar kA" style="left:0px;width:86px"></div>
<div class="c ac kB hasdd" style="left:86px;width:111px"><i class="dd"></i></div>
<div class="c ac kC hasdd" style="left:197px;width:121px"><i class="dd"></i></div>
<div class="c al kD" style="left:318px;width:251px"></div>
<div class="c ar kE" style="left:569px;width:121px"></div>
<div class="c ac kF hasdd" style="left:690px;width:121px"><i class="dd"></i></div>
<div class="c ac kG" style="left:811px;width:81px"></div>
</div>
<div class="rh" style="top:431px">20</div>
<div class="row" style="top:431px">
<div class="c ar kA" style="left:0px;width:86px"></div>
<div class="c ac kB hasdd" style="left:86px;width:111px"><i class="dd"></i></div>
<div class="c ac kC hasdd" style="left:197px;width:121px"><i class="dd"></i></div>
<div class="c al kD" style="left:318px;width:251px"></div>
<div class="c ar kE" style="left:569px;width:121px"></div>
<div class="c ac kF hasdd" style="left:690px;width:121px"><i class="dd"></i></div>
<div class="c ac kG" style="left:811px;width:81px"></div>
</div>
<div class="rh" style="top:452px">21</div>
<div class="row" style="top:452px">
<div class="c ar kA" style="left:0px;width:86px"></div>
<div class="c ac kB hasdd" style="left:86px;width:111px"><i class="dd"></i></div>
<div class="c ac kC hasdd" style="left:197px;width:121px"><i class="dd"></i></div>
<div class="c al kD" style="left:318px;width:251px"></div>
<div class="c ar kE" style="left:569px;width:121px"></div>
<div class="c ac kF hasdd" style="left:690px;width:121px"><i class="dd"></i></div>
<div class="c ac kG" style="left:811px;width:81px"></div>
</div>
<div class="rh" style="top:473px">22</div>
<div class="row" style="top:473px">
<div class="c ar kA" style="left:0px;width:86px"></div>
<div class="c ac kB hasdd" style="left:86px;width:111px"><i class="dd"></i></div>
<div class="c ac kC hasdd" style="left:197px;width:121px"><i class="dd"></i></div>
<div class="c al kD" style="left:318px;width:251px"></div>
<div class="c ar kE" style="left:569px;width:121px"></div>
<div class="c ac kF hasdd" style="left:690px;width:121px"><i class="dd"></i></div>
<div class="c ac kG" style="left:811px;width:81px"></div>
</div>
<div class="rh" style="top:494px">23</div>
<div class="row" style="top:494px">
<div class="c ar kA" style="left:0px;width:86px"></div>
<div class="c ac kB hasdd" style="left:86px;width:111px"><i class="dd"></i></div>
<div class="c ac kC hasdd" style="left:197px;width:121px"><i class="dd"></i></div>
<div class="c al kD" style="left:318px;width:251px"></div>
<div class="c ar kE" style="left:569px;width:121px"></div>
<div class="c ac kF hasdd" style="left:690px;width:121px"><i class="dd"></i></div>
<div class="c ac kG" style="left:811px;width:81px"></div>
</div>
<div class="rh" style="top:515px">24</div>
<div class="row" style="top:515px">
<div class="c ar kA" style="left:0px;width:86px"></div>
<div class="c ac kB hasdd" style="left:86px;width:111px"><i class="dd"></i></div>
<div class="c ac kC hasdd" style="left:197px;width:121px"><i class="dd"></i></div>
<div class="c al kD" style="left:318px;width:251px"></div>
<div class="c ar kE" style="left:569px;width:121px"></div>
<div class="c ac kF hasdd" style="left:690px;width:121px"><i class="dd"></i></div>
<div class="c ac kG" style="left:811px;width:81px"></div>
</div>
<div class="rh" style="top:536px">25</div>
<div class="row" style="top:536px">
<div class="c ar kA" style="left:0px;width:86px"></div>
<div class="c ac kB hasdd" style="left:86px;width:111px"><i class="dd"></i></div>
<div class="c ac kC hasdd" style="left:197px;width:121px"><i class="dd"></i></div>
<div class="c al kD" style="left:318px;width:251px"></div>
<div class="c ar kE" style="left:569px;width:121px"></div>
<div class="c ac kF hasdd" style="left:690px;width:121px"><i class="dd"></i></div>
<div class="c ac kG" style="left:811px;width:81px"></div>
</div>
<div class="rh" style="top:557px">26</div>
<div class="row" style="top:557px">
<div class="c ar kA" style="left:0px;width:86px"></div>
<div class="c ac kB hasdd" style="left:86px;width:111px"><i class="dd"></i></div>
<div class="c ac kC hasdd" style="left:197px;width:121px"><i class="dd"></i></div>
<div class="c al kD" style="left:318px;width:251px"></div>
<div class="c ar kE" style="left:569px;width:121px"></div>
<div class="c ac kF hasdd" style="left:690px;width:121px"><i class="dd"></i></div>
<div class="c ac kG" style="left:811px;width:81px"></div>
</div>
<div class="rh" style="top:578px">27</div>
<div class="row" style="top:578px">
<div class="c ar kA" style="left:0px;width:86px"></div>
<div class="c ac kB hasdd" style="left:86px;width:111px"><i class="dd"></i></div>
<div class="c ac kC hasdd" style="left:197px;width:121px"><i class="dd"></i></div>
<div class="c al kD" style="left:318px;width:251px"></div>
<div class="c ar kE" style="left:569px;width:121px"></div>
<div class="c ac kF hasdd" style="left:690px;width:121px"><i class="dd"></i></div>
<div class="c ac kG" style="left:811px;width:81px"></div>
</div>
<div class="rh" style="top:599px">28</div>
<div class="row" style="top:599px">
<div class="c ar kA" style="left:0px;width:86px"></div>
<div class="c ac kB hasdd" style="left:86px;width:111px"><i class="dd"></i></div>
<div class="c ac kC hasdd" style="left:197px;width:121px"><i class="dd"></i></div>
<div class="c al kD" style="left:318px;width:251px"></div>
<div class="c ar kE" style="left:569px;width:121px"></div>
<div class="c ac kF hasdd" style="left:690px;width:121px"><i class="dd"></i></div>
<div class="c ac kG" style="left:811px;width:81px"></div>
</div>
<div class="rh" style="top:620px">29</div>
<div class="row" style="top:620px">
<div class="c ar kA" style="left:0px;width:86px"></div>
<div class="c ac kB hasdd" style="left:86px;width:111px"><i class="dd"></i></div>
<div class="c ac kC hasdd" style="left:197px;width:121px"><i class="dd"></i></div>
<div class="c al kD" style="left:318px;width:251px"></div>
<div class="c ar kE" style="left:569px;width:121px"></div>
<div class="c ac kF hasdd" style="left:690px;width:121px"><i class="dd"></i></div>
<div class="c ac kG" style="left:811px;width:81px"></div>
</div>
<div class="rh" style="top:641px">30</div>
<div class="row" style="top:641px">
<div class="c ar kA" style="left:0px;width:86px"></div>
<div class="c ac kB hasdd" style="left:86px;width:111px"><i class="dd"></i></div>
<div class="c ac kC hasdd" style="left:197px;width:121px"><i class="dd"></i></div>
<div class="c al kD" style="left:318px;width:251px"></div>
<div class="c ar kE" style="left:569px;width:121px"></div>
<div class="c ac kF hasdd" style="left:690px;width:121px"><i class="dd"></i></div>
<div class="c ac kG" style="left:811px;width:81px"></div>
</div>
<div class="rh" style="top:662px">31</div>
<div class="row" style="top:662px">
<div class="c ar kA" style="left:0px;width:86px"></div>
<div class="c ac kB hasdd" style="left:86px;width:111px"><i class="dd"></i></div>
<div class="c ac kC hasdd" style="left:197px;width:121px"><i class="dd"></i></div>
<div class="c al kD" style="left:318px;width:251px"></div>
<div class="c ar kE" style="left:569px;width:121px"></div>
<div class="c ac kF hasdd" style="left:690px;width:121px"><i class="dd"></i></div>
<div class="c ac kG" style="left:811px;width:81px"></div>
</div>
<div class="rh" style="top:683px">32</div>
<div class="row" style="top:683px">
<div class="c ar kA" style="left:0px;width:86px"></div>
<div class="c ac kB hasdd" style="left:86px;width:111px"><i class="dd"></i></div>
<div class="c ac kC hasdd" style="left:197px;width:121px"><i class="dd"></i></div>
<div class="c al kD" style="left:318px;width:251px"></div>
<div class="c ar kE" style="left:569px;width:121px"></div>
<div class="c ac kF hasdd" style="left:690px;width:121px"><i class="dd"></i></div>
<div class="c ac kG" style="left:811px;width:81px"></div>
</div>
<div class="vsb"></div><div class="hsb"></div>
</div>
<!-- ===== sheet tabs ===== -->
<div class="tabs">
  <svg style="left:54px;top:11px" width="16" height="16" viewBox="0 0 16 16"><path d="M8 3v10M3 8h10" stroke="#444746" stroke-width="1.500"/></svg>
  <svg style="left:94px;top:11px" width="16" height="16" viewBox="0 0 16 16"><path d="M1 4.300h14M1 8.100h14M1 11.900h14" stroke="#444746" stroke-width="1.500"/></svg>
  <div class="tab" style="left:135px;width:130px"><svg class="lk" style="left:14px" width="14" height="16" viewBox="0 0 14 16"><path d="M2 6.500h10a1 1 0 0 1 1 1V15a1 1 0 0 1-1 1H2a1 1 0 0 1-1-1V7.500a1 1 0 0 1 1-1z" fill="#444746"/><path d="M3.800 6.500V4.500a3.200 3.200 0 0 1 6.400 0v2" fill="none" stroke="#444746" stroke-width="1.700"/><circle cx="7" cy="11.300" r="1.300" fill="#f9fbfd"/></svg><span class="nm" style="left:33px">4-ภาพรวม</span><i class="car" style="left:109px"></i><i class="ul" style="background:#a142f4"></i></div>
  <div class="tab" style="left:266px;width:113px"><svg class="lk" style="left:14px" width="14" height="16" viewBox="0 0 14 16"><path d="M2 6.500h10a1 1 0 0 1 1 1V15a1 1 0 0 1-1 1H2a1 1 0 0 1-1-1V7.500a1 1 0 0 1 1-1z" fill="#444746"/><path d="M3.800 6.500V4.500a3.200 3.200 0 0 1 6.400 0v2" fill="none" stroke="#444746" stroke-width="1.700"/><circle cx="7" cy="11.300" r="1.300" fill="#f9fbfd"/></svg><span class="nm" style="left:33px">0-วิธีใช้</span><i class="car" style="left:92px"></i><i class="ul" style="background:#fbbc04"></i></div>
  <div class="tab" style="left:380px;width:145px"><span class="nm" style="left:12px">1-ข้อมูลโครงการ</span><i class="car" style="left:124px"></i><i class="ul" style="background:#20b356"></i></div>
  <div class="tab act" style="left:525px;width:98.500px"><span class="nm" style="left:12px">2-รายรับ</span><i class="car" style="left:78px"></i><i class="ul" style="background:#4285f4"></i></div>
  <div class="tab" style="left:624px;width:106px"><span class="nm" style="left:12px">3-รายจ่าย</span><i class="car" style="left:85px"></i><i class="ul" style="background:#e8453c"></i></div>
  <div class="tab" style="left:731px;width:161px"><svg class="lk" style="left:14px" width="14" height="16" viewBox="0 0 14 16"><path d="M2 6.500h10a1 1 0 0 1 1 1V15a1 1 0 0 1-1 1H2a1 1 0 0 1-1-1V7.500a1 1 0 0 1 1-1z" fill="#444746"/><path d="M3.800 6.500V4.500a3.200 3.200 0 0 1 6.400 0v2" fill="none" stroke="#444746" stroke-width="1.700"/><circle cx="7" cy="11.300" r="1.300" fill="#f9fbfd"/></svg><span class="nm" style="left:33px">5-เจาะโครงการ</span><i class="car" style="left:140px"></i><i class="ul" style="background:#1a9fe0"></i></div>
  <div class="tab" style="left:893px;width:158px"><svg class="lk" style="left:14px" width="14" height="16" viewBox="0 0 14 16"><path d="M2 6.500h10a1 1 0 0 1 1 1V15a1 1 0 0 1-1 1H2a1 1 0 0 1-1-1V7.500a1 1 0 0 1 1-1z" fill="#444746"/><path d="M3.800 6.500V4.500a3.200 3.200 0 0 1 6.400 0v2" fill="none" stroke="#444746" stroke-width="1.700"/><circle cx="7" cy="11.300" r="1.300" fill="#f9fbfd"/></svg><span class="nm" style="left:33px">6-กระแสเงินสด</span><i class="car" style="left:137px"></i><i class="ul" style="background:#26a69a"></i></div>
  <div class="tab" style="left:1052px;width:115px"><svg class="lk" style="left:14px" width="14" height="16" viewBox="0 0 14 16"><path d="M2 6.500h10a1 1 0 0 1 1 1V15a1 1 0 0 1-1 1H2a1 1 0 0 1-1-1V7.500a1 1 0 0 1 1-1z" fill="#444746"/><path d="M3.800 6.500V4.500a3.200 3.200 0 0 1 6.400 0v2" fill="none" stroke="#444746" stroke-width="1.700"/><circle cx="7" cy="11.300" r="1.300" fill="#f9fbfd"/></svg><span class="nm" style="left:33px">7-เปรียบเทียบ</span><i class="ul" style="background:#f08030"></i></div>
  <i style="left:1167px;top:9px;width:1px;height:19px;background:#9aa0a6"></i>
  <svg style="left:1183px;top:11px" width="16" height="16" viewBox="0 0 16 16"><path d="M10.500 3L5.500 8l5 5" fill="none" stroke="#c4c7c5" stroke-width="1.700"/></svg>
  <svg style="left:1223px;top:11px" width="16" height="16" viewBox="0 0 16 16"><path d="M5.500 3l5 5-5 5" fill="none" stroke="#444746" stroke-width="1.700"/></svg>
  <svg style="left:1364px;top:12px" width="16" height="16" viewBox="0 0 16 16"><path d="M10.500 3L5.500 8l5 5" fill="none" stroke="#444746" stroke-width="1.700"/></svg>
</div>

</div>
</body>
</html>
